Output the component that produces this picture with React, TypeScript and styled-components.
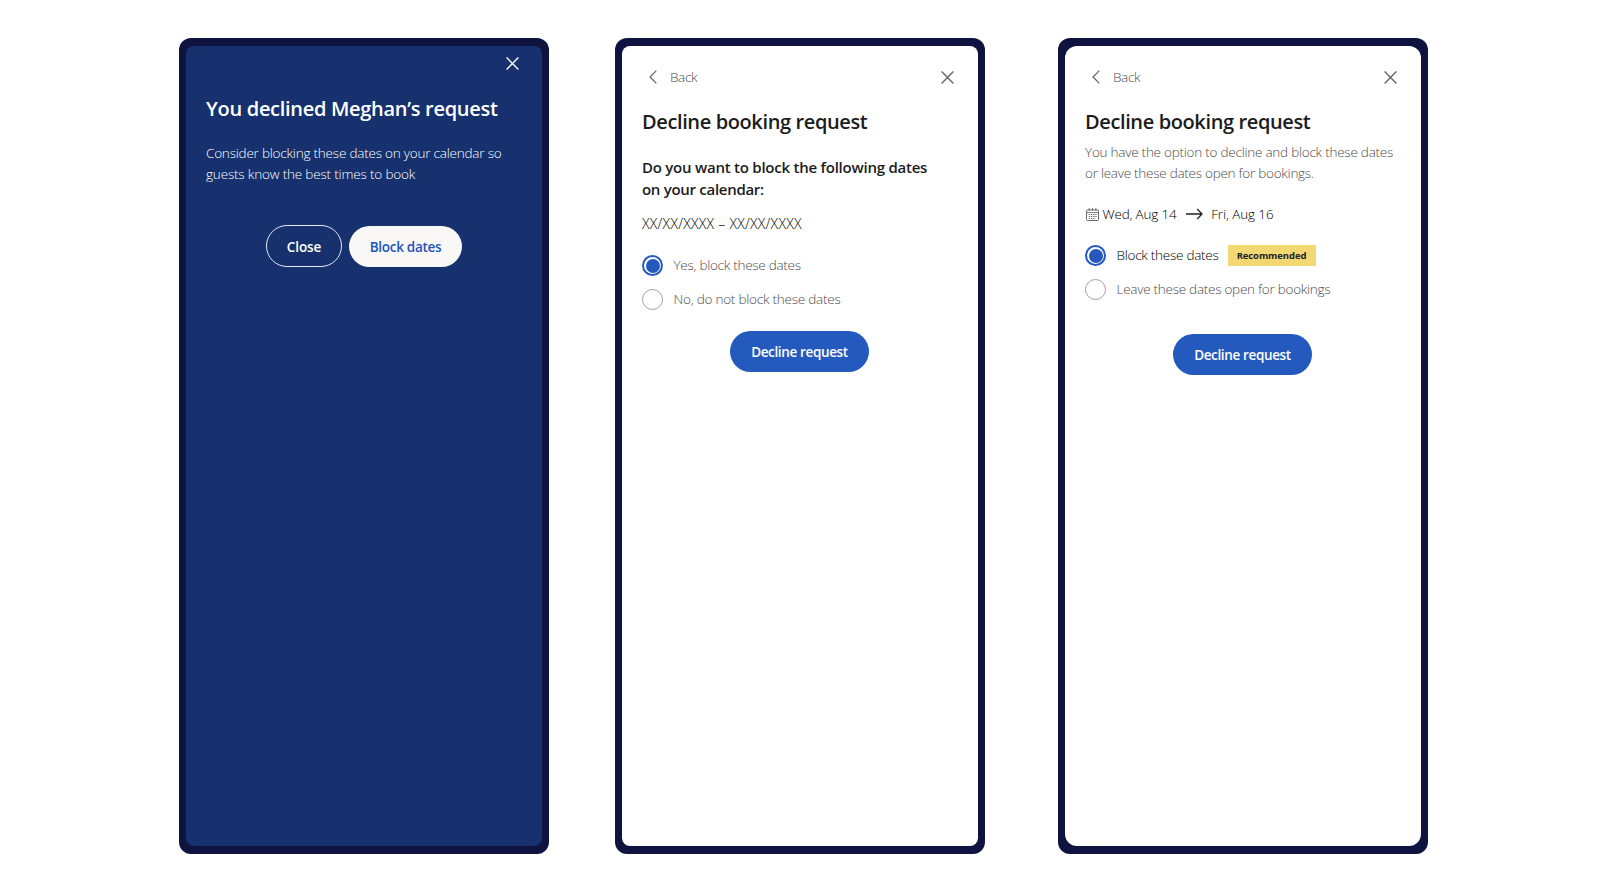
import React from 'react';
import styled, { createGlobalStyle } from 'styled-components';

const GlobalStyle = createGlobalStyle`
  *, *::before, *::after { box-sizing: border-box; }
  html, body { margin: 0; padding: 0; background: #fff; }
  body {
    font-family: 'Open Sans', 'Noto Sans', sans-serif;
    font-size: 13.5px;
    line-height: 20.5px;
    color: #222;
  }
  h1, h2, p { margin: 0; }
  button { font-family: inherit; padding: 0; border: 0; background: none; cursor: pointer; }
  svg { display: block; flex: none; }
`;

const Board = styled.main`
  display: flex;
  width: 1600px;
  height: 889px;
  padding: 38px 0 0 179px;
  overflow: hidden;
`;

const Phone = styled.section<{ $gap?: number }>`
  flex: none;
  width: 370px;
  height: 816px;
  margin-left: ${(p) => p.$gap ?? 0}px;
  padding: 8px 7px;
  border-radius: 12px;
  background: #0f1340;
`;

const Screen = styled.div<{ $dark?: boolean; $radius?: number }>`
  display: flex;
  flex-direction: column;
  height: 100%;
  padding: ${(p) => (p.$dark ? '7px 20px 0' : '20px 21px 0 20px')};
  border-radius: ${(p) => p.$radius ?? 8}px;
  background: ${(p) => (p.$dark ? '#16316d' : '#fff')};
  color: ${(p) => (p.$dark ? '#fff' : '#1c1c1c')};
`;

const TopBar = styled.header<{ $end?: boolean }>`
  display: flex;
  align-items: center;
  justify-content: ${(p) => (p.$end ? 'flex-end' : 'space-between')};
  height: 21px;
  padding: ${(p) => (p.$end ? '0 3px 0 0' : '1px 3.5px 0 6.5px')};
`;

const BackButton = styled.button`
  display: flex;
  align-items: center;
  gap: 13.5px;
  color: #4c4c4c;
  font-size: 13.5px;
  font-weight: 300;
  line-height: 21px;
`;

const IconButton = styled.button<{ $light?: boolean }>`
  color: ${(p) => (p.$light ? '#fff' : '#666')};
`;

const Line = styled.span<{ $tracking?: number }>`
  display: block;
  white-space: nowrap;
  letter-spacing: ${(p) => p.$tracking ?? 0}px;
`;

const Title = styled.h1`
  margin-top: 20.5px;
  font-size: 20px;
  font-weight: 600;
  line-height: 28px;
`;

const Question = styled.h2`
  margin-top: 20px;
  font-size: 15px;
  font-weight: 600;
  line-height: 22.5px;
`;

const Copy = styled.p<{ $top: number; $muted?: boolean }>`
  margin-top: ${(p) => p.$top}px;
  font-weight: 300;
  color: ${(p) => (p.$muted ? '#4c4c4c' : 'inherit')};
`;

const DateRange = styled.p`
  margin-top: 13.5px;
  font-size: 14px;
  font-weight: 300;
  line-height: 20px;
  color: #000;
`;

const Stay = styled.div`
  display: flex;
  align-items: center;
  height: 20px;
  margin-top: 21px;
  font-weight: 300;
  line-height: 20px;
  color: #000;
`;

const StayArrow = styled.span`
  margin: 0 8px 0 9.5px;
`;

const StayIcon = styled.span`
  margin: 0 4px 0 0.5px;
  color: #6a6a6a;
`;

const Choices = styled.div`
  display: flex;
  flex-direction: column;
  gap: 13px;
  margin-top: 21px;
`;

const Choice = styled.label<{ $strong?: boolean }>`
  display: flex;
  align-items: center;
  height: 21px;
  font-weight: 300;
  line-height: 21px;
  color: ${(p) => (p.$strong ? '#000' : '#4c4c4c')};
`;

const Radio = styled.span<{ $on?: boolean }>`
  display: flex;
  align-items: center;
  justify-content: center;
  flex: none;
  width: 21px;
  height: 21px;
  margin-right: 10.5px;
  border-radius: 50%;
  border: ${(p) => (p.$on ? '2px solid #2459bd' : '1px solid #a0a0a0')};

  &::after {
    content: '';
    width: 14px;
    height: 14px;
    border-radius: 50%;
    background: ${(p) => (p.$on ? '#2459bd' : 'transparent')};
  }
`;

const Badge = styled.span`
  display: flex;
  justify-content: center;
  width: 88px;
  height: 21px;
  margin-left: 9px;
  border-radius: 1px;
  background: #f2d772;
  color: #222;
  font-size: 9.5px;
  font-weight: 700;
  line-height: 21px;
`;

const Actions = styled.div<{ $top: number }>`
  display: flex;
  align-items: center;
  justify-content: center;
  gap: 7px;
  height: 42px;
  margin-top: ${(p) => p.$top}px;
`;

const tones = {
  primary: 'background: #2459bd; color: #fff; border: 0;',
  outline: 'background: transparent; color: #fff; border: 1px solid #e4e8f2;',
  light: 'background: #f9f8f7; color: #1f52bd; border: 0;',
};

const Pill = styled.button<{ $tone: keyof typeof tones; $width: number }>`
  ${(p) => tones[p.$tone]}
  display: flex;
  align-items: center;
  justify-content: center;
  width: ${(p) => p.$width}px;
  height: ${(p) => (p.$tone === 'outline' ? 42 : 41)}px;
  padding-top: 1px;
  border-radius: 21px;
  font-size: 13.5px;
  font-weight: 600;
`;

const CloseIcon = () => (
  <svg width="13" height="13" viewBox="0 0 13 13" fill="none" stroke="currentColor" strokeWidth="1.4">
    <path d="M.6.6l11.8 11.8M12.4.6L.6 12.4" />
  </svg>
);

const ChevronIcon = () => (
  <svg width="8" height="14" viewBox="0 0 8 14" fill="none" stroke="#666" strokeWidth="1.3">
    <path d="M7.3.6L1.1 7l6.2 6.4" />
  </svg>
);

const CalendarIcon = () => (
  <svg width="13" height="13" viewBox="0 0 13 13" fill="none" stroke="currentColor">
    <rect x=".5" y="1.9" width="12" height="10.6" rx="1.2" />
    <path d="M.5 4.6h12M3.2 0v3M6.5 0v3M9.8 0v3" strokeWidth=".9" />
    <path d="M2.8 6.5h1.3M5 6.5h1.3M7.2 6.5h1.3M9.3 6.5h1.3M2.8 8.5h1.3M5 8.5h1.3M7.2 8.5h1.3M9.3 8.5h1.3M2.8 10.5h1.3M5 10.5h1.3M7.2 10.5h1.3" strokeWidth="1" />
  </svg>
);

const ArrowIcon = () => (
  <svg width="17" height="12" viewBox="0 0 17 12" fill="none" stroke="#222" strokeWidth="1.3">
    <path d="M0 6h16M11.2 1L16 6l-4.8 5" />
  </svg>
);

const BackBar = () => (
  <TopBar>
    <BackButton>
      <ChevronIcon />
      <Line $tracking={-0.35}>Back</Line>
    </BackButton>
    <IconButton aria-label="Dismiss">
      <CloseIcon />
    </IconButton>
  </TopBar>
);

export default function App() {
  return (
    <>
      <GlobalStyle />
      <Board>
        <Phone>
          <Screen $dark>
            <TopBar $end>
              <IconButton $light aria-label="Dismiss">
                <CloseIcon />
              </IconButton>
            </TopBar>
            <Title>
              <Line $tracking={-0.3}>You declined Meghan’s request</Line>
            </Title>
            <Copy $top={20.5}>
              <Line $tracking={-0.21}>Consider blocking these dates on your calendar so</Line>
              <Line $tracking={-0.17}>guests know the best times to book</Line>
            </Copy>
            <Actions $top={41}>
              <Pill $tone="outline" $width={76}>
                <Line $tracking={-0.05}>Close</Line>
              </Pill>
              <Pill $tone="light" $width={113}>
                <Line $tracking={-0.3}>Block dates</Line>
              </Pill>
            </Actions>
          </Screen>
        </Phone>

        <Phone $gap={66}>
          <Screen>
            <BackBar />
            <Title>
              <Line $tracking={-0.38}>Decline booking request</Line>
            </Title>
            <Question>
              <Line $tracking={-0.24}>Do you want to block the following dates</Line>
              <Line $tracking={-0.29}>on your calendar:</Line>
            </Question>
            <DateRange>
              <Line $tracking={0.26}>XX/XX/XXXX – XX/XX/XXXX</Line>
            </DateRange>
            <Choices>
              <Choice>
                <Radio $on />
                <Line $tracking={-0.27}>Yes, block these dates</Line>
              </Choice>
              <Choice>
                <Radio />
                <Line $tracking={-0.23}>No, do not block these dates</Line>
              </Choice>
            </Choices>
            <Actions $top={20}>
              <Pill $tone="primary" $width={139}>
                <Line $tracking={-0.36}>Decline request</Line>
              </Pill>
            </Actions>
          </Screen>
        </Phone>

        <Phone $gap={73}>
          <Screen $radius={12}>
            <BackBar />
            <Title>
              <Line $tracking={-0.38}>Decline booking request</Line>
            </Title>
            <Copy $top={6.5} $muted>
              <Line $tracking={-0.24}>You have the option to decline and block these dates</Line>
              <Line $tracking={-0.26}>or leave these dates open for bookings.</Line>
            </Copy>
            <Stay>
              <StayIcon>
                <CalendarIcon />
              </StayIcon>
              <Line $tracking={-0.16}>Wed, Aug 14</Line>
              <StayArrow>
                <ArrowIcon />
              </StayArrow>
              <Line $tracking={-0.1}>Fri, Aug 16</Line>
            </Stay>
            <Choices>
              <Choice $strong>
                <Radio $on />
                <Line $tracking={-0.26}>Block these dates</Line>
                <Badge>
                  <Line $tracking={-0.1}>Recommended</Line>
                </Badge>
              </Choice>
              <Choice>
                <Radio />
                <Line $tracking={-0.26}>Leave these dates open for bookings</Line>
              </Choice>
            </Choices>
            <Actions $top={33.5}>
              <Pill $tone="primary" $width={139}>
                <Line $tracking={-0.36}>Decline request</Line>
              </Pill>
            </Actions>
          </Screen>
        </Phone>
      </Board>
    </>
  );
}
